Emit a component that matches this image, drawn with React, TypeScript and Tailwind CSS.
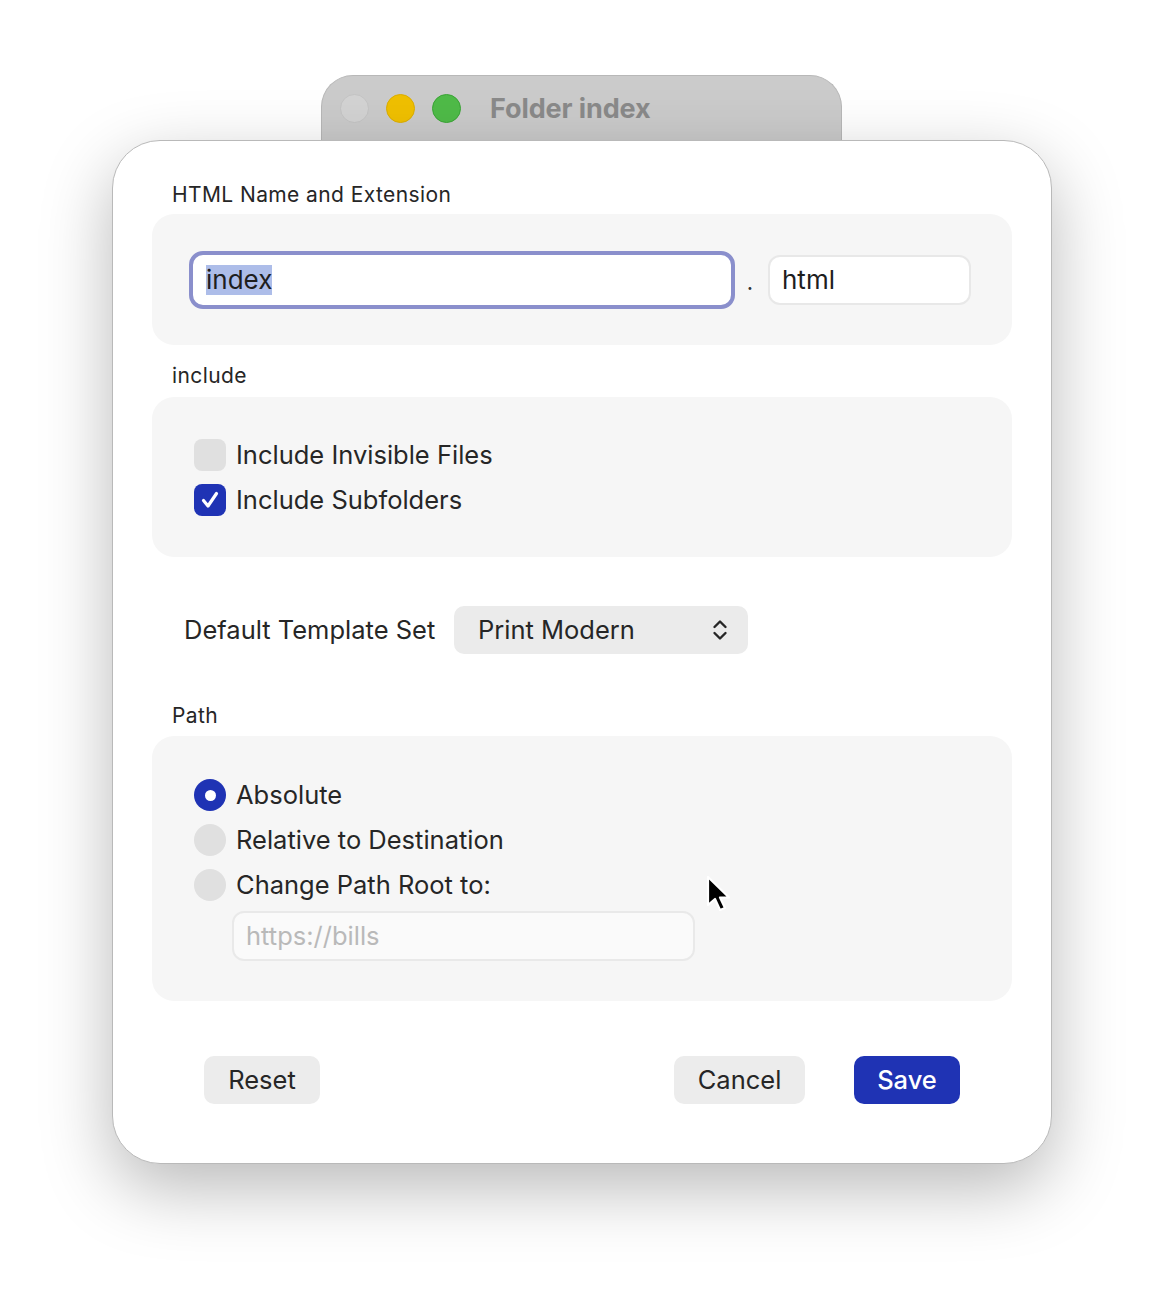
import React from "react";

const font = { fontFamily: "Inter, 'Noto Sans', sans-serif" };

function Checkbox({ checked }: { checked: boolean }) {
  return checked ? (
    <div className="w-[32px] h-[32px] rounded-[8px] bg-[#1f33b4] flex items-center justify-center">
      <svg width="22" height="22" viewBox="0 0 22 22">
        <path d="M4.5 11.5 L9 17 L17.5 4.5" fill="none" stroke="white" strokeWidth="3.2" strokeLinecap="round" strokeLinejoin="round" />
      </svg>
    </div>
  ) : (
    <div className="w-[32px] h-[32px] rounded-[8px] bg-[#e0e0e0]" />
  );
}

function Radio({ checked }: { checked: boolean }) {
  return checked ? (
    <div className="w-[32px] h-[32px] rounded-full bg-[#1f33b4] flex items-center justify-center">
      <div className="w-[11px] h-[11px] rounded-full bg-white" />
    </div>
  ) : (
    <div className="w-[32px] h-[32px] rounded-full bg-[#e0e0e0]" />
  );
}

export default function App() {
  return (
    <div className="relative w-[1164px] h-[1312px] bg-white text-[#262626]" style={font}>
      <div className="flex flex-col pt-[75px] pl-[112px]">
        {/* Title tab */}
        <div className="ml-[209px] w-[521px] h-[66px] -mb-px rounded-t-[32px] bg-[#cbcbcb] border border-b-0 border-[#b8b8b8] flex items-center pl-[18px]">
          <div className="w-[29px] h-[29px] rounded-full bg-[#d3d3d3] border border-[#c4c4c4]" />
          <div className="ml-[17px] w-[29px] h-[29px] rounded-full bg-[#f0c000] border border-[#dcae00]" />
          <div className="ml-[17px] w-[29px] h-[29px] rounded-full bg-[#4fbb48] border border-[#3aa535]" />
          <div className="ml-[29px] text-[27px] font-bold text-[#8a8a8a] tracking-[-0.1px] pt-[2px]">Folder index</div>
        </div>
        {/* Window */}
        <div className="relative w-[940px] h-[1024px] rounded-[48px] border border-[#b9b9b9] bg-white shadow-[0_24px_70px_rgba(0,0,0,0.28)] px-[39px] pt-[42px] flex flex-col">
          <div className="pl-[20px] h-[24px] leading-[24px] text-[21px] tracking-[0.4px] text-[#262626]">HTML Name and Extension</div>
          <div className="mt-[7px] h-[131px] rounded-[22px] bg-[#f6f6f6] flex items-center pl-[37px]">
            <div className="w-[546px] h-[58px] rounded-[14px] border-[4px] border-[#8a8fcc] bg-white flex items-center pl-[13px]">
              <span className="bg-[#adbde9] text-[26px] leading-[30px] text-[#1e1e1e]">index</span>
            </div>
            <div className="w-[30px] text-center text-[22px] text-[#333] pt-[6px]">.</div>
            <div className="ml-[3px] w-[203px] h-[50px] rounded-[12px] border-2 border-[#e8e8e8] bg-white flex items-center pl-[12px] text-[26px] text-[#1e1e1e]">html</div>
          </div>
          <div className="mt-[19px] pl-[20px] h-[24px] leading-[24px] text-[21px] tracking-[0.4px]">include</div>
          <div className="mt-[9px] h-[160px] rounded-[22px] bg-[#f6f6f6] pl-[42px] pt-[42px] flex flex-col gap-[13px]">
            <div className="flex items-center gap-[10px] h-[32px]">
              <Checkbox checked={false} />
              <span className="text-[25.5px]">Include Invisible Files</span>
            </div>
            <div className="flex items-center gap-[10px] h-[32px]">
              <Checkbox checked={true} />
              <span className="text-[25.5px]">Include Subfolders</span>
            </div>
          </div>
          <div className="mt-[49px] pl-[32px] flex items-center h-[48px]">
            <span className="w-[270px] text-[25.5px] whitespace-nowrap">Default Template Set</span>
            <div className="w-[294px] h-[48px] rounded-[10px] bg-[#ebebeb] flex items-center pl-[24px] pr-[20px] justify-between">
              <span className="text-[25.5px]">Print Modern</span>
              <svg width="16" height="24" viewBox="0 0 16 24">
                <path d="M2.5 9 L8 3.5 L13.5 9" fill="none" stroke="#262626" strokeWidth="2.4" strokeLinecap="round" strokeLinejoin="round" />
                <path d="M2.5 15 L8 20.5 L13.5 15" fill="none" stroke="#262626" strokeWidth="2.4" strokeLinecap="round" strokeLinejoin="round" />
              </svg>
            </div>
          </div>
          <div className="mt-[50px] pl-[20px] h-[24px] leading-[24px] text-[21px] tracking-[0.4px]">Path</div>
          <div className="mt-[8px] h-[265px] rounded-[22px] bg-[#f6f6f6] pl-[42px] pt-[43px] flex flex-col">
            <div className="flex flex-col gap-[13px]">
              <div className="flex items-center gap-[10px] h-[32px]">
                <Radio checked={true} />
                <span className="text-[25.5px]">Absolute</span>
              </div>
              <div className="flex items-center gap-[10px] h-[32px]">
                <Radio checked={false} />
                <span className="text-[25.5px]">Relative to Destination</span>
              </div>
              <div className="flex items-center gap-[10px] h-[32px]">
                <Radio checked={false} />
                <span className="text-[25.5px]">Change Path Root to:</span>
              </div>
            </div>
            <div className="mt-[10px] ml-[38px] w-[463px] h-[50px] rounded-[12px] border-2 border-[#e9e9e9] bg-[#fafafa] flex items-center pl-[12px] text-[25.5px] text-[#b9b9b9]">
              https://bills
            </div>
          </div>
          <div className="mt-[55px] px-[52px] flex items-center">
            <div className="w-[116px] h-[48px] rounded-[10px] bg-[#ececec] flex items-center justify-center text-[25.5px]">Reset</div>
            <div className="flex-1" />
            <div className="w-[131px] h-[48px] rounded-[10px] bg-[#ececec] flex items-center justify-center text-[25.5px]">Cancel</div>
            <div className="ml-[49px] w-[106px] h-[48px] rounded-[10px] bg-[#1f33b4] flex items-center justify-center text-[25.5px] font-medium text-white">Save</div>
          </div>
        </div>
      </div>
      {/* cursor */}
      <svg className="absolute left-[704px] top-[874px]" width="32" height="44" viewBox="0 0 32 44">
        <path d="M4 3 L4 31 L11 25 L16 36 L21 34 L16 23.5 L25 23.5 Z" fill="black" stroke="white" strokeWidth="2.2" strokeLinejoin="round" />
      </svg>
    </div>
  );
}
